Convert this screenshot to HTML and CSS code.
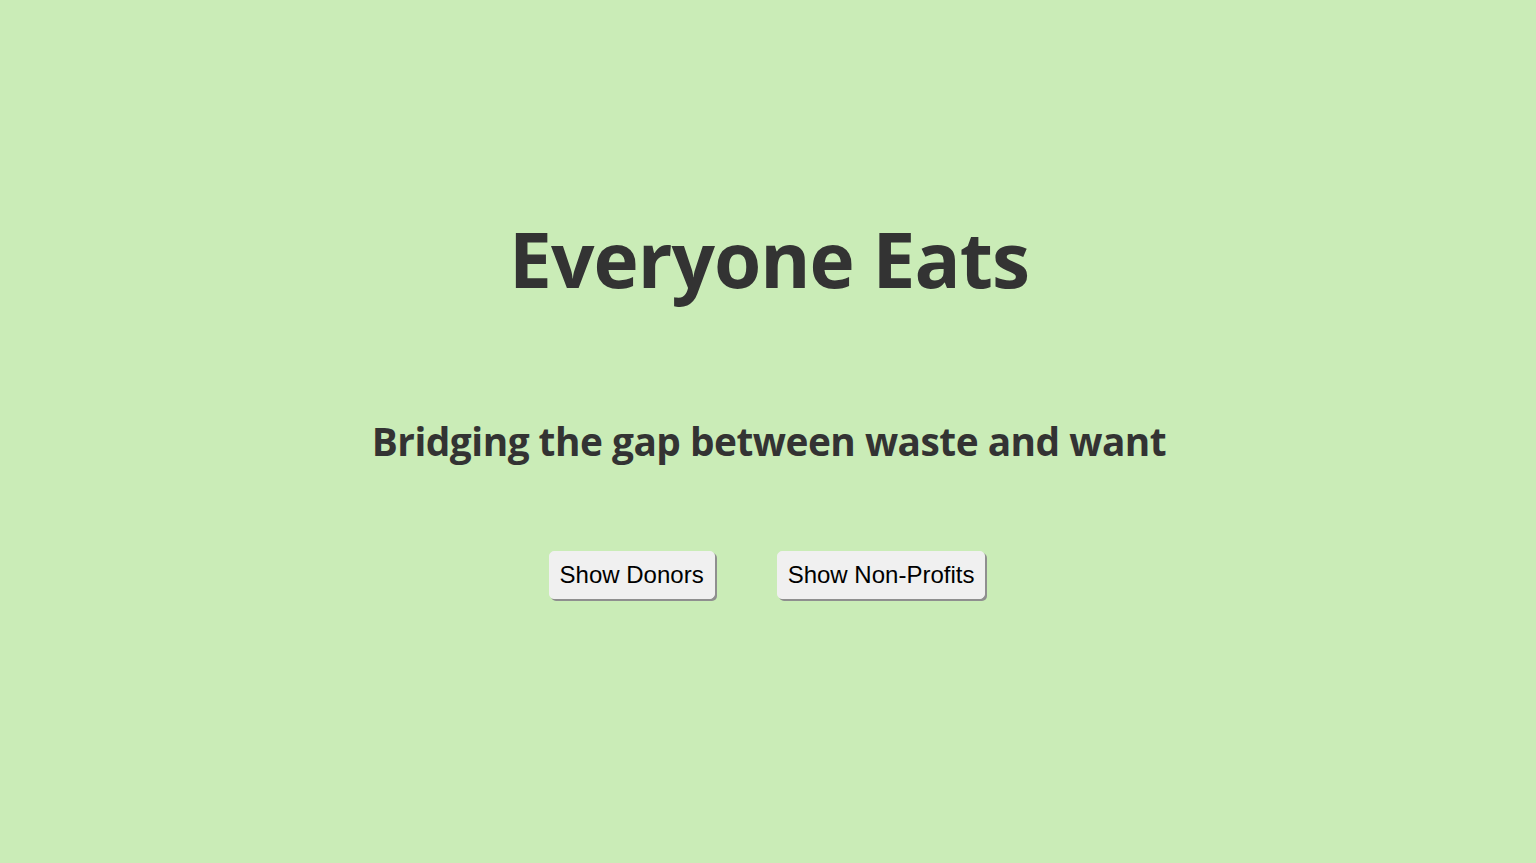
FILE: index.html
```html
<!DOCTYPE html>
<html lang="en">
<head>
<meta charset="utf-8">
<title>Everyone Eats</title>
<link rel="stylesheet" href="styles.css">
</head>
<body>
<main class="hero">
  <h1 class="title">Everyone Eats</h1>
  <h2 class="subtitle">Bridging the gap between waste and want</h2>
  <div class="actions">
    <button class="btn">Show Donors</button>
    <button class="btn">Show Non-Profits</button>
  </div>
</main>
</body>
</html>
```

FILE: styles.css
```css
html, body {
  margin: 0;
  padding: 0;
  height: 100%;
}
body {
  background: #caecb7;
  color: #333333;
  font-family: "Open Sans", "Noto Sans", sans-serif;
}
.hero {
  display: flex;
  flex-direction: column;
  align-items: center;
  padding-top: 208px;
  padding-left: 2px;
}
.title {
  margin: 0;
  font-size: 76.5px;
  font-weight: 700;
  line-height: 100px;
  letter-spacing: -1px;
}
.subtitle {
  margin: 0;
  margin-top: 108px;
  font-size: 38.8px;
  font-weight: 700;
  line-height: 50px;
  letter-spacing: -0.5px;
}
.actions {
  display: flex;
  gap: 62px;
  margin-top: 85px;
  margin-right: 4px;
}
.btn {
  font-family: "Liberation Sans", Arial, sans-serif;
  font-size: 24px;
  color: #000;
  background: #f0f0f0;
  border: 1px solid #f0f0f0;
  border-radius: 5px;
  box-shadow: 2px 2px 0 #8f8f8f;
  height: 48px;
  padding: 0 10px;
  cursor: pointer;
}
```
